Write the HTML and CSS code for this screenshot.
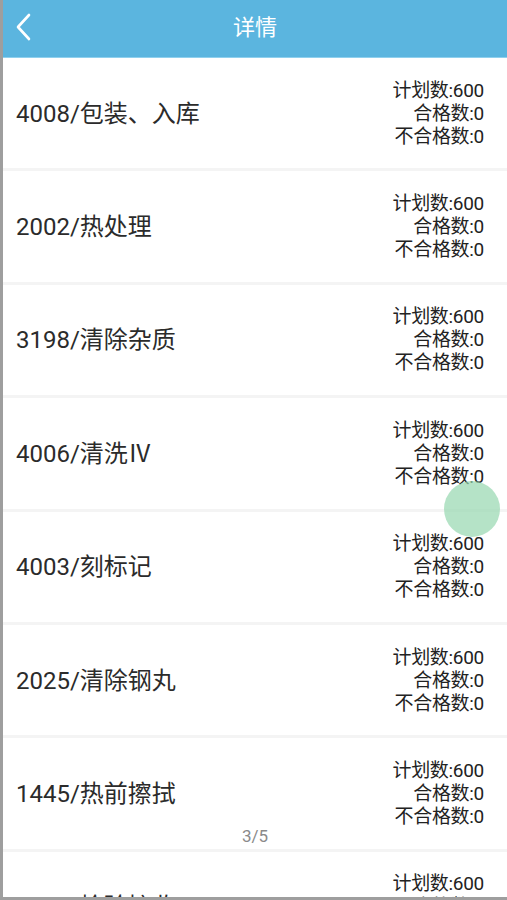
FILE: index.html
```html
<!DOCTYPE html>
<html lang="zh-CN">
<head>
    <meta charset="UTF-8">
    <meta name="viewport" content="width=device-width, initial-scale=1.0">
    <title>详情</title>
    <link rel="stylesheet" href="styles.css">
</head>
<body>
    <div class="screen">
        <div class="header">
            <a class="back" href="#">
                <svg width="16" height="28" viewBox="0 0 16 28"><path d="M14 2 L3 14 L14 26" fill="none" stroke="#fff" stroke-width="2.6" stroke-linecap="round" stroke-linejoin="round"/></svg>
            </a>
            <h1>详情</h1>
        </div>

        <div class="list">
            <div class="row">
                <div class="name">4008/包装、入库</div>
                <div class="counts"><span>计划数:600</span><span>合格数:0</span><span>不合格数:0</span></div>
            </div>
            <div class="row">
                <div class="name">2002/热处理</div>
                <div class="counts"><span>计划数:600</span><span>合格数:0</span><span>不合格数:0</span></div>
            </div>
            <div class="row">
                <div class="name">3198/清除杂质</div>
                <div class="counts"><span>计划数:600</span><span>合格数:0</span><span>不合格数:0</span></div>
            </div>
            <div class="row">
                <div class="name">4006/清洗Ⅳ</div>
                <div class="counts"><span>计划数:600</span><span>合格数:0</span><span>不合格数:0</span></div>
            </div>
            <div class="row">
                <div class="name">4003/刻标记</div>
                <div class="counts"><span>计划数:600</span><span>合格数:0</span><span>不合格数:0</span></div>
            </div>
            <div class="row">
                <div class="name">2025/清除钢丸</div>
                <div class="counts"><span>计划数:600</span><span>合格数:0</span><span>不合格数:0</span></div>
            </div>
            <div class="row">
                <div class="name">1445/热前擦拭</div>
                <div class="counts"><span>计划数:600</span><span>合格数:0</span><span>不合格数:0</span></div>
            </div>
            <div class="row">
                <div class="name">2001/检验接收</div>
                <div class="counts"><span>计划数:600</span><span>合格数:0</span><span>不合格数:0</span></div>
            </div>
        </div>

        <div class="pager">3/5</div>
        <div class="touch"></div>
    </div>
</body>
</html>
```

FILE: styles.css
```css
html, body {
    margin: 0;
    height: 100%;
    overflow: hidden;
}
body {
    font-family: Roboto, "Noto Sans CJK SC", sans-serif;
    background-color: #9e9e9e;
    color: #333;
}
.screen {
    position: relative;
    margin-left: 3px;
    height: 897px;
    overflow: hidden;
    background-color: #fff;
}
.header {
    position: relative;
    height: 57px;
    background-color: #5bb5df;
    border-bottom: 1px solid #8fd0ee;
    display: flex;
    align-items: center;
    justify-content: center;
}
.back {
    position: absolute;
    left: 12px;
    top: 13px;
    display: block;
}
.header h1 {
    margin: 0 0 7px;
    font-size: 22px;
    font-weight: normal;
    color: #fff;
}
.row {
    height: 110.4px;
    border-bottom: 3px solid #f4f4f4;
    display: flex;
    align-items: center;
    justify-content: space-between;
    padding: 0 23px 0 13px;
}
.name {
    margin-bottom: 4px;
    font-size: 24px;
    color: #2b2b2b;
}
.counts {
    display: flex;
    flex-direction: column;
    align-items: flex-end;
    font-size: 19px;
    line-height: 23px;
    color: #222;
    letter-spacing: -0.3px;
}
.pager {
    position: absolute;
    left: 0;
    right: 0;
    top: 826px;
    text-align: center;
    font-size: 17px;
    color: #8a8a8a;
}
.touch {
    position: absolute;
    left: 441px;
    top: 481px;
    width: 56px;
    height: 56px;
    border-radius: 50%;
    background-color: rgba(150, 215, 175, 0.7);
}
```
